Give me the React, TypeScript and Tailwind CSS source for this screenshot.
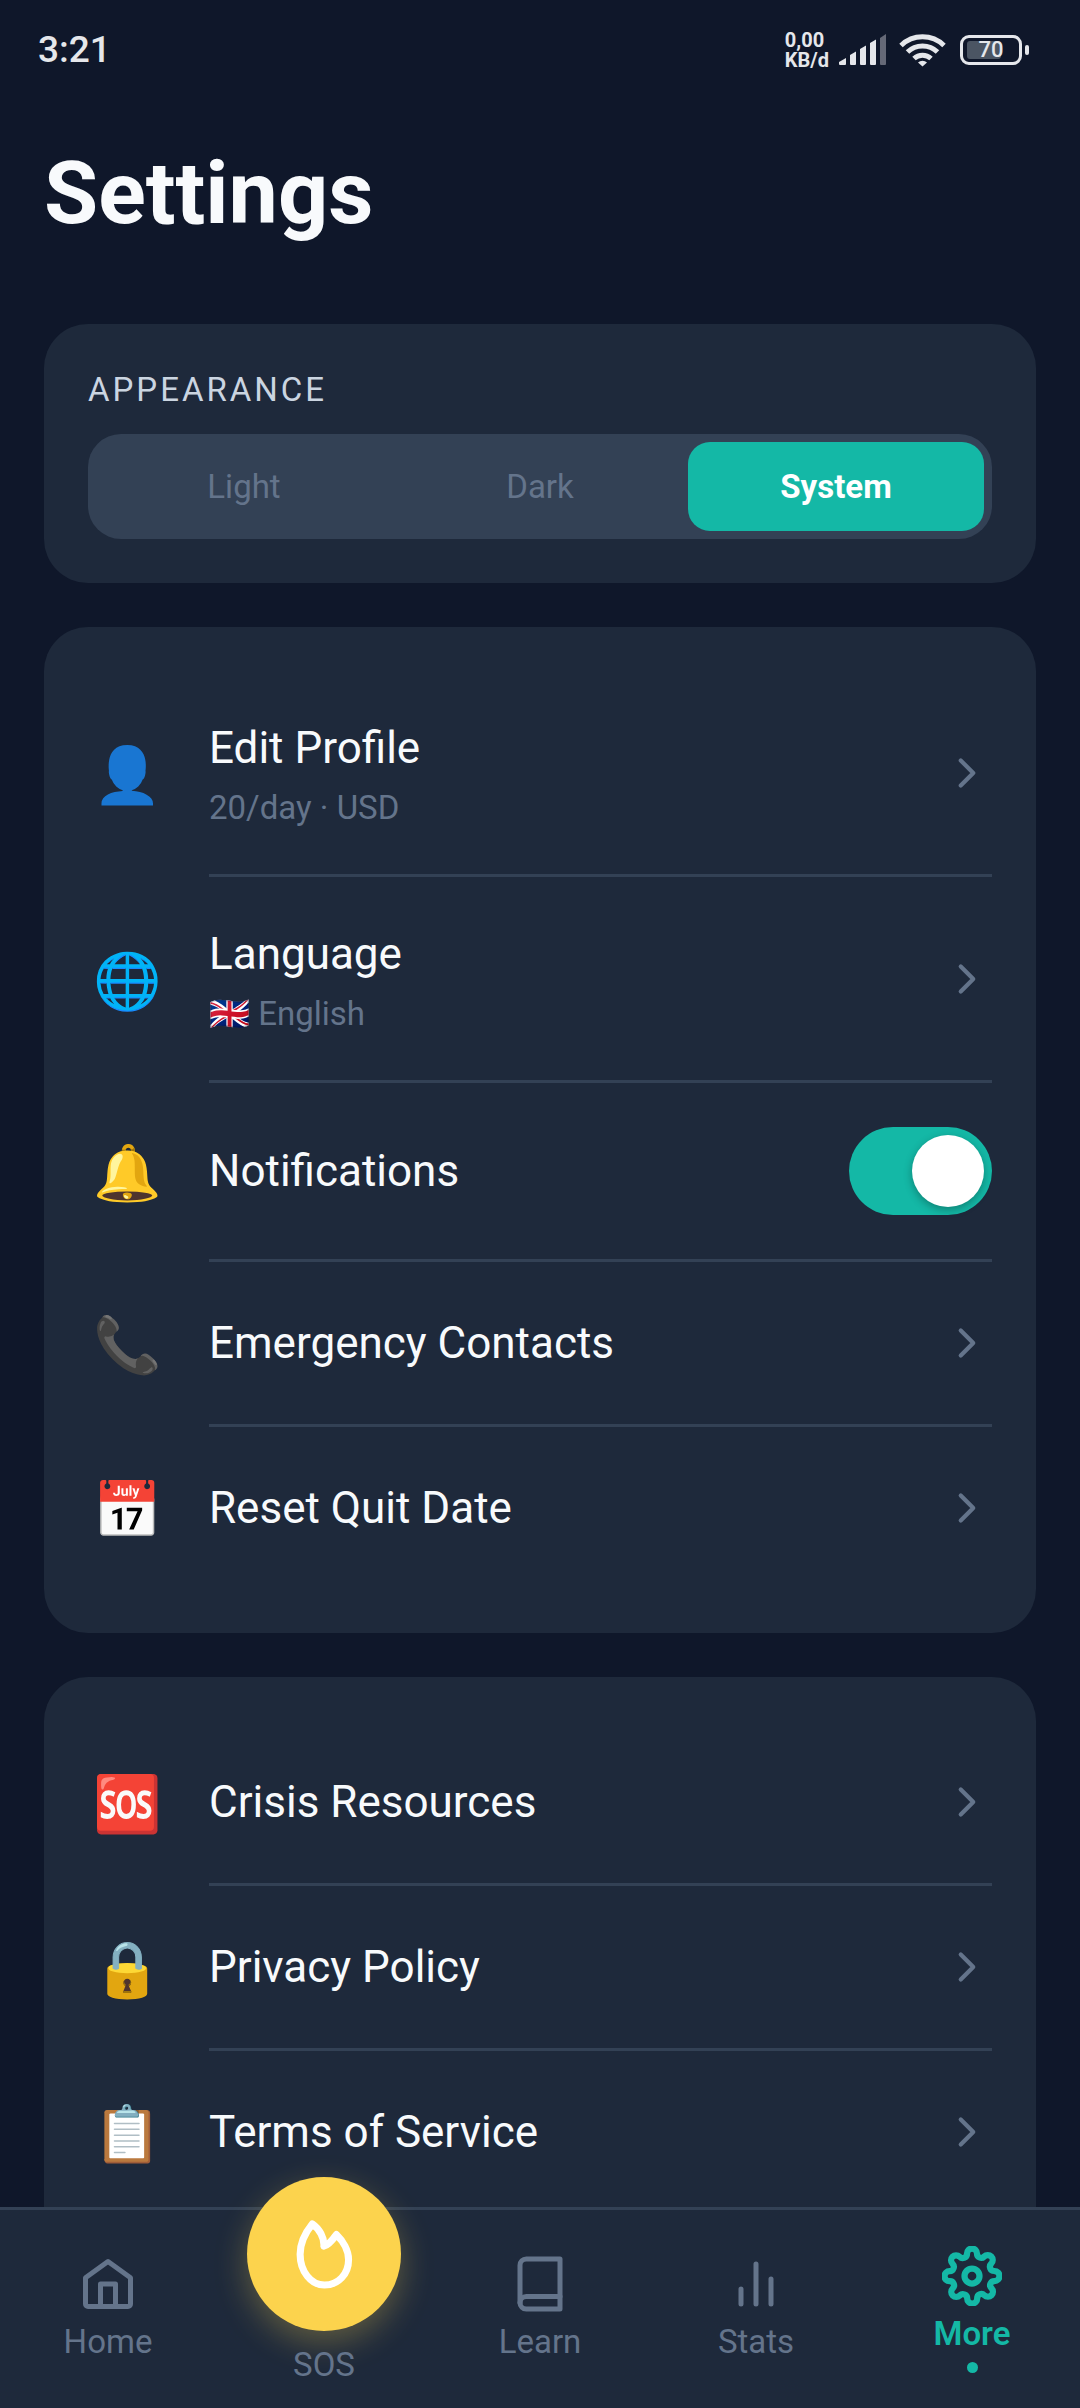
import { useState, type ReactNode } from "react";

type RowItem = {
  emoji: string;
  label: string;
  detail?: string;
  flag?: string;
  toggle?: boolean;
};

const THEMES = ["Light", "Dark", "System"];

const PREFERENCES: RowItem[] = [
  { emoji: "👤", label: "Edit Profile", detail: "20/day · USD" },
  { emoji: "🌐", label: "Language", flag: "🇬🇧", detail: "English" },
  { emoji: "🔔", label: "Notifications", toggle: true },
  { emoji: "📞", label: "Emergency Contacts" },
  { emoji: "📅", label: "Reset Quit Date" },
];

const RESOURCES: RowItem[] = [
  { emoji: "🆘", label: "Crisis Resources" },
  { emoji: "🔒", label: "Privacy Policy" },
  { emoji: "📋", label: "Terms of Service" },
];

function StatusBar() {
  return (
    <div className="flex h-[100px] shrink-0 items-center justify-between pr-[51px] pl-[38px] text-[#e5e7eb]">
      <span className="text-[37px] leading-11 font-medium">3:21</span>
      <div className="flex items-center">
        <div className="mr-2.5 text-[20px] leading-5 font-bold">
          <div>0,00</div>
          <div>KB/d</div>
        </div>
        <svg className="mr-3" width="48" height="32" viewBox="0 0 48 32" fill="currentColor">
          <path d="M0 28l7-4v6a1 1 0 0 1-1 1H1a1 1 0 0 1-1-1z" />
          <path d="M11 21l6-3.5v12.5a1 1 0 0 1-1 1h-4a1 1 0 0 1-1-1z" />
          <path d="M21 15l6-3.5v18.5a1 1 0 0 1-1 1h-4a1 1 0 0 1-1-1z" />
          <path d="M31 9l6-3.5v24.5a1 1 0 0 1-1 1h-4a1 1 0 0 1-1-1z" />
          <path opacity="0.4" d="M41 4l6-4v30a1 1 0 0 1-1 1h-4a1 1 0 0 1-1-1z" />
        </svg>
        <svg className="mr-3.5" width="47" height="34" viewBox="0 0 47 34" fill="none" stroke="currentColor" strokeWidth="5">
          <path d="M2 12.5a31 31 0 0 1 43 0" />
          <path d="M8.500 19a21.500 21.500 0 0 1 30 0" />
          <path d="M15 25.500a12.500 12.500 0 0 1 17 0" />
          <path d="M19 29.500a6.500 6.500 0 0 1 9 0l-4.500 4z" fill="currentColor" stroke="none" />
        </svg>
        <div className="flex items-center gap-[3px]">
          <div className="relative flex h-[30px] w-[62px] items-center justify-center rounded-[9px] border-3 border-[#e5e7eb]">
            <div className="absolute top-[3px] bottom-[3px] left-1 w-[34px] rounded-[3px] bg-[#4b5563]" />
            <span className="relative text-[22px] leading-6 font-medium">70</span>
          </div>
          <div className="h-2.5 w-1 rounded-full bg-[#e5e7eb]" />
        </div>
      </div>
    </div>
  );
}

function Chevron() {
  return (
    <svg width="50" height="50" viewBox="0 0 24 24" fill="none" stroke="#64748b" strokeWidth="2" strokeLinecap="round" strokeLinejoin="round">
      <path d="M9 18l6-6-6-6" />
    </svg>
  );
}

function RowBody({ item, children }: { item: RowItem; children: ReactNode }) {
  return (
    <>
      <span className="flex w-[77px] shrink-0 justify-center pt-1 text-[55px] leading-[70px]">{item.emoji}</span>
      <span className="flex-1 text-left">
        <span className="block text-[44px] leading-[66px] text-[#f8fafc]">{item.label}</span>
        {item.detail && (
          <span className="mt-1 block text-[33px] leading-[45px] text-[#64748b]">
            {item.flag && <span>{item.flag} </span>}
            {item.detail}
          </span>
        )}
      </span>
      {children}
    </>
  );
}

function SettingsCard({ items }: { items: RowItem[] }) {
  return (
    <section className="rounded-[44px] bg-[#1e293b] p-11">
      <ul>
        {items.map((item, i) => (
          <li key={item.label}>
            {i > 0 && <div className="ml-[121px] h-[3px] bg-[#334155]" />}
            {item.toggle ? (
              <label className="flex items-center gap-11 py-11">
                <RowBody item={item}>
                  <input
                    type="checkbox"
                    role="switch"
                    defaultChecked
                    className="h-[88px] w-[143px] shrink-0 appearance-none rounded-full bg-[#334155] p-2 before:block before:size-[72px] before:rounded-full before:bg-white before:shadow-[0_3px_8px_rgba(0,0,0,0.3)] checked:bg-[#14b8a6] checked:before:ml-auto"
                  />
                </RowBody>
              </label>
            ) : (
              <button type="button" className="flex w-full items-center gap-11 py-11">
                <RowBody item={item}>
                  <Chevron />
                </RowBody>
              </button>
            )}
          </li>
        ))}
      </ul>
    </section>
  );
}

function NavIcon({ children, strokeWidth = 2 }: { children: ReactNode; strokeWidth?: number }) {
  return (
    <svg width="60" height="60" viewBox="0 0 24 24" fill="none" stroke="currentColor" strokeWidth={strokeWidth} strokeLinecap="round" strokeLinejoin="round">
      {children}
    </svg>
  );
}

const NAV_ITEM = "flex flex-1 flex-col items-center justify-center gap-1.5 text-[33px] leading-11";

function TabBar() {
  return (
    <nav className="relative flex h-[201px] shrink-0 border-t-3 border-[#334155] bg-[#1e293b] text-[#64748b]">
      <a href="#home" className={NAV_ITEM}>
        <NavIcon>
          <path d="M3 9.500L12 3l9 6.500V20a1 1 0 0 1-1 1H4a1 1 0 0 1-1-1z" />
          <path d="M9 21v-9h6v9" />
        </NavIcon>
        Home
      </a>
      <a href="#sos" className={NAV_ITEM}>
        <span className="-mt-[54px] mb-1.5 flex size-[154px] shrink-0 items-center justify-center rounded-full bg-[#fcd34d] text-white shadow-[0_11px_33px_rgba(252,211,77,0.3)]">
          <svg width="77" height="77" viewBox="0 0 24 24" fill="none" stroke="currentColor" strokeWidth="2.2" strokeLinecap="round" strokeLinejoin="round">
            <path d="M8.200 2.500C6 5.200 4.400 8.600 4.400 11.900c0 5.400 3.400 9.600 7.600 9.600s7.500-3.300 7.500-7.900c0-2.800-1.700-5.800-3.800-7.800-1 1.400-2.300 3.200-3.900 3.600.2-2.600-1.400-5.400-3.600-6.900z" />
          </svg>
        </span>
        SOS
      </a>
      <a href="#learn" className={NAV_ITEM}>
        <NavIcon>
          <path d="M4 19.500A2.500 2.500 0 0 1 6.500 17H20" />
          <path d="M6.500 2H20v20H6.500A2.500 2.500 0 0 1 4 19.500v-15A2.500 2.500 0 0 1 6.500 2z" />
        </NavIcon>
        Learn
      </a>
      <a href="#stats" className={NAV_ITEM}>
        <NavIcon>
          <path d="M18 20V10M12 20V4M6 20v-6" />
        </NavIcon>
        Stats
      </a>
      <a href="#more" aria-current="page" className={`${NAV_ITEM} font-semibold text-[#14b8a6]`}>
        <NavIcon strokeWidth={2.5}>
          <circle cx="12" cy="12" r="3" />
          <path d="M19.4 15a1.65 1.65 0 0 0 .33 1.82l.06.06a2 2 0 0 1 0 2.830 2 2 0 0 1-2.830 0l-.06-.06a1.650 1.650 0 0 0-1.820-.33 1.650 1.650 0 0 0-1 1.510V21a2 2 0 0 1-2 2 2 2 0 0 1-2-2v-.09A1.650 1.650 0 0 0 9 19.400a1.650 1.650 0 0 0-1.820.33l-.06.06a2 2 0 0 1-2.830 0 2 2 0 0 1 0-2.830l.06-.06a1.650 1.650 0 0 0 .33-1.820 1.650 1.650 0 0 0-1.510-1H3a2 2 0 0 1-2-2 2 2 0 0 1 2-2h.09A1.650 1.650 0 0 0 4.600 9a1.650 1.650 0 0 0-.33-1.820l-.06-.06a2 2 0 0 1 0-2.830 2 2 0 0 1 2.830 0l.06.06a1.650 1.650 0 0 0 1.820.33H9a1.650 1.650 0 0 0 1-1.510V3a2 2 0 0 1 2-2 2 2 0 0 1 2 2v.09a1.650 1.650 0 0 0 1 1.510 1.650 1.650 0 0 0 1.820-.33l.06-.06a2 2 0 0 1 2.830 0 2 2 0 0 1 0 2.830l-.06.06a1.650 1.650 0 0 0-.33 1.820V9a1.650 1.650 0 0 0 1.510 1H21a2 2 0 0 1 2 2 2 2 0 0 1-2 2h-.09a1.650 1.650 0 0 0-1.510 1z" />
        </NavIcon>
        More
        <span className="size-[11px] rounded-full bg-[#14b8a6]" />
      </a>
    </nav>
  );
}

export default function App() {
  const [theme, setTheme] = useState("System");

  return (
    <div className="flex h-screen flex-col bg-[#0f172a] font-[Roboto,sans-serif]">
      <StatusBar />
      <main className="flex-1 overflow-y-auto px-11 [scrollbar-width:none]">
        <h1 className="pt-[38px] pb-[76px] text-[88px] leading-[110px] font-bold text-[#f8fafc]">Settings</h1>
        <div className="flex flex-col gap-11">
          <section className="rounded-[44px] bg-[#1e293b] p-11">
            <h2 className="mb-5.5 text-[33px] leading-11 tracking-[3px] text-[#cbd5e1] uppercase">Appearance</h2>
            <div className="flex rounded-[33px] bg-[#334155] p-2">
              {THEMES.map((name) => (
                <button
                  key={name}
                  type="button"
                  aria-pressed={theme === name}
                  onClick={() => setTheme(name)}
                  className={`flex-1 rounded-[22px] py-5.5 text-[33px] leading-[45px] ${
                    theme === name ? "bg-[#14b8a6] font-bold text-white" : "text-[#64748b]"
                  }`}
                >
                  {name}
                </button>
              ))}
            </div>
          </section>
          <SettingsCard items={PREFERENCES} />
          <SettingsCard items={RESOURCES} />
        </div>
      </main>
      <TabBar />
    </div>
  );
}
